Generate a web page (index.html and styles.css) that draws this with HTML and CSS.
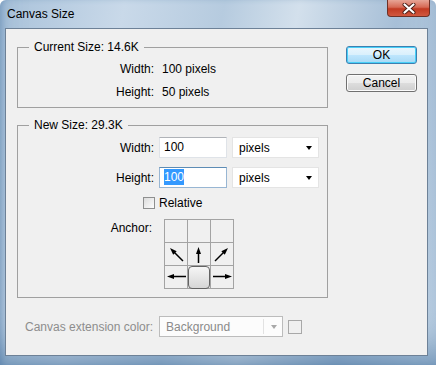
FILE: index.html
```html
<!DOCTYPE html>
<html lang="en">
<head>
    <meta charset="UTF-8">
    <title>Canvas Size</title>
    <link rel="stylesheet" href="styles.css">
</head>
<body>

    <div class="window">
        <div class="titlebar">
            <span class="title">Canvas Size</span>
            <span class="close">
                <svg width="14" height="11" viewBox="0 0 14 11">
                    <path d="M2.5 1.5 L11.5 9.5 M11.5 1.5 L2.5 9.5" stroke="#4a1c14" stroke-width="4" stroke-linecap="round"/>
                    <path d="M2.5 1.5 L11.5 9.5 M11.5 1.5 L2.5 9.5" stroke="#fff" stroke-width="2.2" stroke-linecap="round"/>
                </svg>
            </span>
        </div>

        <div class="client">
            <div class="main">
                <div class="sizes">
                    <fieldset class="group current">
                        <legend>Current Size: 14.6K</legend>
                        <div class="info-grid">
                            <span class="lbl">Width:</span><span>100 pixels</span>
                            <span class="lbl">Height:</span><span>50 pixels</span>
                        </div>
                    </fieldset>

                    <fieldset class="group new">
                        <legend>New Size: 29.3K</legend>
                        <div class="field-grid">
                            <span class="lbl">Width:</span>
                            <div class="textbox">100</div>
                            <div class="combo">pixels<span class="arrow"></span></div>

                            <span class="lbl">Height:</span>
                            <div class="textbox focused"><span class="selected">100</span></div>
                            <div class="combo">pixels<span class="arrow"></span></div>
                        </div>

                        <div class="check"><span class="box"></span>Relative</div>

                        <div class="anchor-row">
                            <span class="lbl">Anchor:</span>
                            <div class="anchor">
                                <div class="cell"></div>
                                <div class="cell"></div>
                                <div class="cell"></div>
                                <div class="cell">
                                    <svg width="22" height="22" viewBox="0 0 22 22">
                                        <line x1="18" y1="18" x2="9" y2="9" stroke="#000" stroke-width="1.5"/>
                                        <polygon points="5,5 11.7,8.2 8.2,11.7" fill="#000"/>
                                    </svg>
                                </div>
                                <div class="cell">
                                    <svg width="22" height="22" viewBox="0 0 22 22">
                                        <line x1="10.5" y1="20" x2="10.5" y2="9" stroke="#000" stroke-width="1.5"/>
                                        <polygon points="10.5,4 8,11 13,11" fill="#000"/>
                                    </svg>
                                </div>
                                <div class="cell">
                                    <svg width="22" height="22" viewBox="0 0 22 22">
                                        <line x1="4" y1="18" x2="13" y2="9" stroke="#000" stroke-width="1.5"/>
                                        <polygon points="17,5 10.3,8.2 13.8,11.7" fill="#000"/>
                                    </svg>
                                </div>
                                <div class="cell">
                                    <svg width="22" height="22" viewBox="0 0 22 22">
                                        <line x1="21" y1="10.5" x2="7" y2="10.5" stroke="#000" stroke-width="1.5"/>
                                        <polygon points="2,10.5 9,8 9,13" fill="#000"/>
                                    </svg>
                                </div>
                                <div class="cell"><span class="picked"></span></div>
                                <div class="cell">
                                    <svg width="22" height="22" viewBox="0 0 22 22">
                                        <line x1="2" y1="10.5" x2="15" y2="10.5" stroke="#000" stroke-width="1.5"/>
                                        <polygon points="21,10.5 14,8 14,13" fill="#000"/>
                                    </svg>
                                </div>
                            </div>
                        </div>
                    </fieldset>
                </div>

                <div class="buttons">
                    <button class="btn btn-default">OK</button>
                    <button class="btn">Cancel</button>
                </div>
            </div>

            <div class="ext-row">
                <span class="ext-label">Canvas extension color:</span>
                <div class="combo disabled">Background<span class="arrow"></span></div>
                <span class="swatch"></span>
            </div>
        </div>
    </div>

</body>
</html>
```

FILE: styles.css
```css
html, body {
    margin: 0;
    padding: 0;
    overflow: hidden;
}

body {
    font-family: 'Liberation Sans', Arial, sans-serif;
    font-size: 12px;
    color: #000;
    background-color: #fff;
}

.window {
    width: 436px;
    height: 365px;
    box-sizing: border-box;
    padding: 0 8px 9px 5px;
    display: flex;
    flex-direction: column;
    border-radius: 6px 6px 0 0;
    background: linear-gradient(100deg, #a9c2da 0%, #c9d9e9 25%, #b6cbdf 45%, #d3e0ec 60%, #a7bfd7 80%, #c1d4e6 100%);
    box-shadow: inset 0 -30px 40px -20px rgba(40, 90, 140, 0.6), inset 4px 0 6px -2px rgba(60, 110, 160, 0.35);
}

/* title bar */
.titlebar {
    height: 28px;
    display: flex;
    justify-content: space-between;
    align-items: flex-start;
    margin-right: -2px;
}

.title {
    padding-left: 2px;
    line-height: 29px;
    font-family: 'Liberation Sans', sans-serif;
    font-size: 12px;
}

.close {
    width: 41px;
    height: 16px;
    display: flex;
    align-items: center;
    justify-content: center;
    border: 1px solid #6e3026;
    border-top: none;
    border-radius: 0 0 4px 4px;
    background: linear-gradient(#e7a596 0%, #d66a55 45%, #c23a22 55%, #d1583f 100%);
}

/* dialog area */
.client {
    flex: 1;
    background-color: #f0f0f0;
    border: 1px solid #6d8197;
    display: flex;
    flex-direction: column;
}

.main {
    display: flex;
    padding: 11px 0 0 11px;
}

.sizes {
    width: 311px;
}

.group {
    margin: 0;
    padding: 0;
    border: 1px solid #a0a0a0;
    min-width: 0;
}

.group legend {
    margin-left: 11px;
    padding: 0 5px;
    line-height: 14px;
}

.current {
    padding: 3px 0 4px 0;
}

.new {
    margin-top: 10px;
    padding: 5px 0 8px 0;
}

.info-grid {
    display: grid;
    grid-template-columns: 136px auto;
    column-gap: 8px;
    grid-auto-rows: 23px;
    align-items: center;
}

.lbl {
    text-align: right;
}

.field-grid {
    display: grid;
    grid-template-columns: 136px 68px 87px;
    column-gap: 5px;
    row-gap: 9px;
    grid-auto-rows: 21px;
    align-items: center;
}

.textbox {
    height: 21px;
    box-sizing: border-box;
    background-color: #fff;
    border: 1px solid #dfe3e8;
    border-top-color: #b0b3b8;
    padding: 0 0 0 4px;
    line-height: 19px;
}

.textbox.focused {
    border-color: #98b6d3;
    border-top-color: #5d8cb5;
}

.selected {
    background-color: #3399ff;
    color: #fff;
    padding: 1px 0;
}

.combo {
    height: 21px;
    box-sizing: border-box;
    background-color: #fff;
    border: 1px solid #e4e4e4;
    padding-left: 6px;
    line-height: 20px;
    position: relative;
}

.combo .arrow {
    position: absolute;
    right: 6px;
    top: 8px;
    border-left: 3px solid transparent;
    border-right: 3px solid transparent;
    border-top: 4px solid #000;
}

.check {
    display: flex;
    align-items: center;
    margin: 9px 0 0 125px;
    height: 12px;
}

.check .box {
    width: 10px;
    height: 10px;
    border: 1px solid #8e8f8f;
    background: linear-gradient(135deg, #dcdcdc, #fdfdfd);
    margin-right: 4px;
}

.anchor-row {
    display: flex;
    align-items: flex-start;
    margin-top: 10px;
}

.anchor-row .lbl {
    width: 134px;
    padding-top: 2px;
}

.anchor {
    margin-left: 12px;
    display: grid;
    grid-template-columns: repeat(3, 22px);
    grid-template-rows: repeat(3, 22px);
    gap: 1px;
    border: 1px solid #a3a3a3;
    background-color: #a3a3a3;
}

.cell {
    background-color: #f0f0f0;
    position: relative;
}

.cell svg {
    display: block;
}

.picked {
    position: absolute;
    left: 0;
    top: 0;
    right: 0;
    bottom: -1px;
    border: 1px solid #636363;
    border-radius: 4px;
    background: linear-gradient(#f6f6f6, #d6d6d6);
}

/* buttons */
.buttons {
    margin-left: 18px;
    padding-top: 6px;
    display: flex;
    flex-direction: column;
    gap: 10px;
}

.btn {
    width: 71px;
    height: 18px;
    padding: 0;
    font-family: 'Liberation Sans', sans-serif;
    font-size: 12px;
    color: #000;
    border: 1px solid #707070;
    border-radius: 3px;
    background: linear-gradient(#f2f2f2 0%, #ebebeb 50%, #dddddd 51%, #cfcfcf 100%);
    box-shadow: inset 0 0 0 1px #fbfbfb;
}

.btn-default {
    border-color: #3c7fb1;
    box-shadow: inset 0 0 0 1px #48d0f8;
    background: linear-gradient(#eaf6fd 0%, #d9f0fc 50%, #bee6fd 51%, #a7d9f5 100%);
}

/* bottom row */
.ext-row {
    display: flex;
    align-items: center;
    margin-top: 18px;
    padding-left: 19px;
}

.ext-label {
    color: #8d8d8d;
    margin-right: 6px;
}

.combo.disabled {
    width: 124px;
    border-color: #bcbcbc;
    background-color: #fcfcfc;
    color: #8a8a8a;
}

.combo.disabled::before {
    content: "";
    position: absolute;
    right: 18px;
    top: 2px;
    bottom: 2px;
    border-left: 1px solid #e2e2e2;
}

.combo.disabled .arrow {
    right: 5px;
    border-top-color: #a8a8a8;
}

.swatch {
    width: 12px;
    height: 12px;
    margin-left: 5px;
    border: 1px solid #a8a8a8;
    background-color: #f0f0f0;
}
```
